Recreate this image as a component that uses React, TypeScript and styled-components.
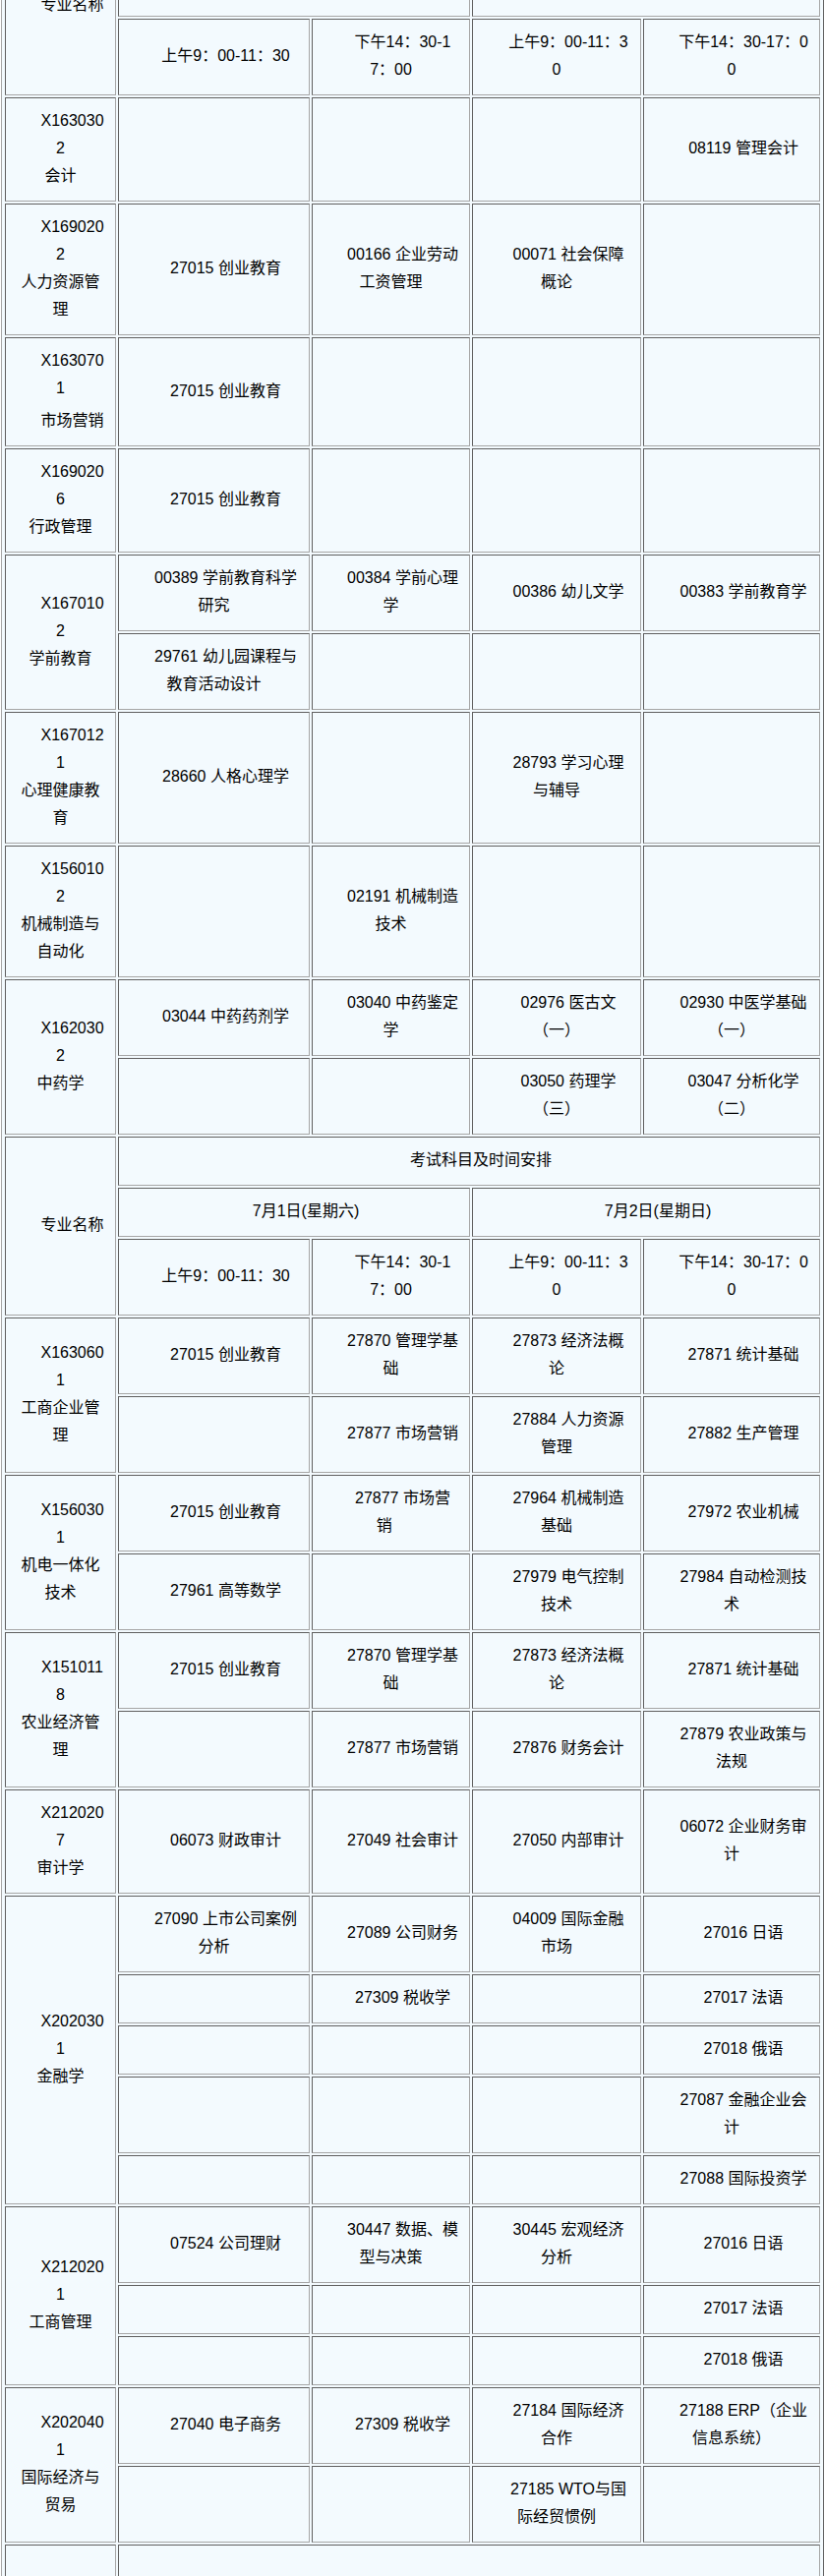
import styled, { createGlobalStyle } from "styled-components";

const GlobalStyle = createGlobalStyle`
  html, body {
    margin: 0;
    padding: 0;
    background: #fff;
  }
  body {
    font-family: "Liberation Sans", "Noto Sans CJK SC", sans-serif;
  }
`;

const Page = styled.div`
  height: 2620px;
  overflow: hidden;
`;

const Schedule = styled.table`
  width: 837px;
  margin: -89px 0 0 1px;
  table-layout: fixed;
  border-collapse: separate;
  border-spacing: 2px;
  padding: 1px;
  border: 1px solid;
  border-color: #a6a6a6 #5f5f5f #5f5f5f #a6a6a6;
  background: #f3fafe;
  color: #000;
  font-size: 16px;
  line-height: 28px;
`;

const Col = styled.col<{ $w: number }>`
  width: ${(p) => p.$w}px;
`;

const Row = styled.tr<{ $h?: number }>`
  height: ${(p) => (p.$h ? `${p.$h}px` : "auto")};
`;

const Cell = styled.td`
  padding: 9px 10px 11px;
  border: 1px solid;
  border-color: #5f5f5f #a6a6a6 #a6a6a6 #5f5f5f;
  text-align: center;
  vertical-align: middle;
  text-indent: 24px;
  word-break: break-all;
`;

// second paragraph inside a cell, it keeps the indent of the first one
const Para = styled.div`
  margin-top: 5px;
`;

type Major = { code: string; name: string; rows?: number; para?: boolean };
type Line = { major?: Major; subjects: string[] };

const widths = [113, 195, 161, 172, 180];

const block1: Line[] = [
  { major: { code: "X1630302", name: "会计" }, subjects: ["", "", "", "08119 管理会计"] },
  {
    major: { code: "X1690202", name: "人力资源管理" },
    subjects: ["27015 创业教育", "00166 企业劳动工资管理", "00071 社会保障概论", ""],
  },
  { major: { code: "X1630701", name: "市场营销", para: true }, subjects: ["27015 创业教育", "", "", ""] },
  { major: { code: "X1690206", name: "行政管理" }, subjects: ["27015 创业教育", "", "", ""] },
  {
    major: { code: "X1670102", name: "学前教育", rows: 2 },
    subjects: ["00389 学前教育科学研究", "00384 学前心理学", "00386 幼儿文学", "00383 学前教育学"],
  },
  { subjects: ["29761 幼儿园课程与教育活动设计", "", "", ""] },
  {
    major: { code: "X1670121", name: "心理健康教育" },
    subjects: ["28660 人格心理学", "", "28793 学习心理与辅导", ""],
  },
  { major: { code: "X1560102", name: "机械制造与自动化" }, subjects: ["", "02191 机械制造技术", "", ""] },
  {
    major: { code: "X1620302", name: "中药学", rows: 2 },
    subjects: ["03044 中药药剂学", "03040 中药鉴定学", "02976 医古文（一）", "02930 中医学基础（一）"],
  },
  { subjects: ["", "", "03050 药理学（三）", "03047 分析化学（二）"] },
];

const block2: Line[] = [
  {
    major: { code: "X1630601", name: "工商企业管理", rows: 2 },
    subjects: ["27015 创业教育", "27870 管理学基础", "27873 经济法概论", "27871 统计基础"],
  },
  { subjects: ["", "27877 市场营销", "27884 人力资源管理", "27882 生产管理"] },
  {
    major: { code: "X1560301", name: "机电一体化技术", rows: 2 },
    subjects: ["27015 创业教育", "27877 市场营销\u00a0\u00a0\u00a0", "27964 机械制造基础", "27972 农业机械"],
  },
  { subjects: ["27961 高等数学", "", "27979 电气控制技术", "27984 自动检测技术"] },
  {
    major: { code: "X1510118", name: "农业经济管理", rows: 2 },
    subjects: ["27015 创业教育", "27870 管理学基础", "27873 经济法概论", "27871 统计基础"],
  },
  { subjects: ["", "27877 市场营销", "27876 财务会计", "27879 农业政策与法规"] },
  {
    major: { code: "X2120207", name: "审计学" },
    subjects: ["06073 财政审计", "27049 社会审计", "27050 内部审计", "06072 企业财务审计"],
  },
  {
    major: { code: "X2020301", name: "金融学", rows: 5 },
    subjects: ["27090 上市公司案例分析", "27089 公司财务", "04009 国际金融市场", "27016 日语"],
  },
  { subjects: ["", "27309 税收学", "", "27017 法语"] },
  { subjects: ["", "", "", "27018 俄语"] },
  { subjects: ["", "", "", "27087 金融企业会计"] },
  { subjects: ["", "", "", "27088 国际投资学"] },
  {
    major: { code: "X2120201", name: "工商管理", rows: 3 },
    subjects: ["07524 公司理财", "30447 数据、模型与决策", "30445 宏观经济分析", "27016 日语"],
  },
  { subjects: ["", "", "", "27017 法语"] },
  { subjects: ["", "", "", "27018 俄语"] },
  {
    major: { code: "X2020401", name: "国际经济与贸易", rows: 2 },
    subjects: ["27040 电子商务", "27309 税收学", "27184 国际经济合作", "27188 ERP（企业信息系统）"],
  },
  { subjects: ["", "", "27185 WTO与国际经贸惯例", ""] },
];

const times = ["上午9：00-11：30", "下午14：30-17：00", "上午9：00-11：30", "下午14：30-17：00"];

function Header() {
  return (
    <>
      <Row>
        <Cell rowSpan={3}>专业名称</Cell>
        <Cell colSpan={4}>考试科目及时间安排</Cell>
      </Row>
      <Row>
        <Cell colSpan={2}>7月1日(星期六)</Cell>
        <Cell colSpan={2}>7月2日(星期日)</Cell>
      </Row>
      <Row>
        {times.map((t, i) => (
          <Cell key={i}>{t}</Cell>
        ))}
      </Row>
    </>
  );
}

function renderLines(lines: Line[], prefix: string) {
  return lines.map((line, i) => (
    <Row key={prefix + i}>
      {line.major && (
        <Cell rowSpan={line.major.rows}>
          {line.major.code}
          {line.major.para ? (
            <Para>{line.major.name}</Para>
          ) : (
            <>
              <br />
              {line.major.name}
            </>
          )}
        </Cell>
      )}
      {line.subjects.map((s, j) => (
        <Cell key={j}>{s}</Cell>
      ))}
    </Row>
  ));
}

export default function App() {
  return (
    <Page>
      <GlobalStyle />
      <Schedule>
        <colgroup>
          {widths.map((w, i) => (
            <Col key={i} $w={w} />
          ))}
        </colgroup>
        <tbody>
          <Header />
          {renderLines(block1, "a")}
          <Header />
          {renderLines(block2, "b")}
          <Row $h={120}>
            <Cell />
            <Cell colSpan={4} />
          </Row>
        </tbody>
      </Schedule>
    </Page>
  );
}
